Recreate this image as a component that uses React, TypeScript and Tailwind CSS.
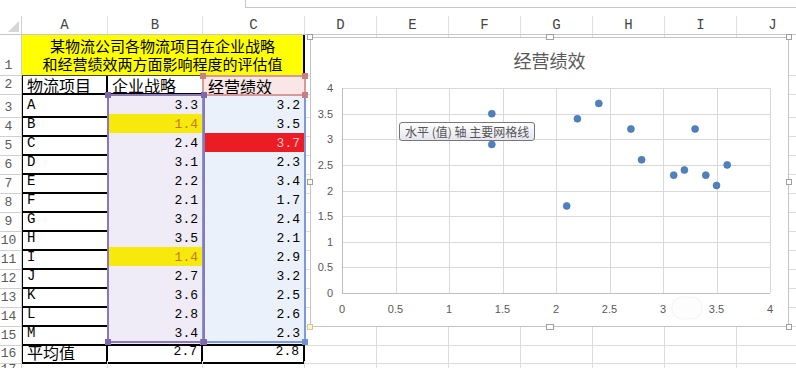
import React from 'react'

const GRID = 'grid grid-cols-[22px_86px_95px_102px_repeat(7,72px)]'
const COLS = ['A', 'B', 'C', 'D', 'E', 'F', 'G', 'H', 'I', 'J']

const DATA: [string, number, number][] = [
    ['A', 3.3, 3.2],
    ['B', 1.4, 3.5],
    ['C', 2.4, 3.7],
    ['D', 3.1, 2.3],
    ['E', 2.2, 3.4],
    ['F', 2.1, 1.7],
    ['G', 3.2, 2.4],
    ['H', 3.5, 2.1],
    ['I', 1.4, 2.9],
    ['J', 2.7, 3.2],
    ['K', 3.6, 2.5],
    ['L', 2.8, 2.6],
    ['M', 3.4, 2.3],
]

function RowNum({ n }: { n: number }) {
    return (
        <div className="flex items-end justify-center pr-1 pb-[1px] border-r border-b border-[#d0d0d0] text-[13px] leading-[17px] text-[#5a5a5a]">
            {n}
        </div>
    )
}

function Blanks({ n = 7 }: { n?: number }) {
    return (
        <>
            {Array.from({ length: n }).map((_, i) => (
                <div key={i} className="border-r border-b border-[#dcdcdc]" />
            ))}
        </>
    )
}

function Handle({ className }: { className: string }) {
    return <span className={`absolute w-[6px] h-[6px] ${className}`} />
}

// plot scale (svg coords)
const sx = (v: number) => 31 + v * 107
const sy = (v: number) => 209 - v * 51.25
const TICKS = [0, 0.5, 1, 1.5, 2, 2.5, 3, 3.5, 4]

function Chart() {
    return (
        <div className="absolute left-[310px] top-[37px] w-[479px] h-[290px] border border-[#c4c4c4] bg-white">
            <div className="h-[45px] flex items-center justify-center text-[18px] text-[#595959] font-['Noto_Sans_CJK_SC',sans-serif]">
                经营绩效
            </div>
            <svg width="477" height="243" className="block overflow-visible" shapeRendering="crispEdges">
                <g transform="translate(0,1)">
                    {TICKS.map((t) => (
                        <line key={'h' + t} x1={sx(0)} x2={sx(4)} y1={Math.round(sy(t)) + 0.5} y2={Math.round(sy(t)) + 0.5} stroke={t === 0 ? '#bfbfbf' : '#d9d9d9'} />
                    ))}
                    {TICKS.map((t) => (
                        <line key={'v' + t} y1={sy(4)} y2={sy(0)} x1={Math.round(sx(t)) + 0.5} x2={Math.round(sx(t)) + 0.5} stroke={t === 0 ? '#bfbfbf' : '#d9d9d9'} />
                    ))}
                    <g fontFamily="Liberation Sans, sans-serif" fontSize="11" fill="#595959" shapeRendering="auto">
                        {TICKS.map((t) => (
                            <text key={'yl' + t} x={22} y={sy(t) + 4} textAnchor="end">
                                {t}
                            </text>
                        ))}
                        {TICKS.map((t) => (
                            <text key={'xl' + t} x={sx(t)} y={229} textAnchor="middle">
                                {t}
                            </text>
                        ))}
                    </g>
                    <rect x={361} y={213} width={30} height={22} rx={10} fill="#fdfdfd" stroke="#f3f3f3" shapeRendering="auto" />
                    <g shapeRendering="auto">
                        {DATA.map(([k, x, y]) => (
                            <circle key={k} cx={sx(x)} cy={sy(y)} r={3.5} fill="#4f81bd" stroke="#4170aa" strokeWidth={0.6} />
                        ))}
                    </g>
                </g>
            </svg>

            {/* tooltip */}
            <div className="absolute left-[88px] top-[84px] h-[19px] px-[5px] flex items-center rounded-[3px] border border-[#777] bg-gradient-to-b from-white to-[#e4e5ee] text-[12px] text-[#555] font-['Noto_Sans_CJK_SC',sans-serif] whitespace-nowrap">
                水平 (值) 轴 主要网格线
            </div>

            {/* selection handles */}
            <Handle className="-left-[4px] -top-[4px] border border-[#a0a0a0] bg-white" />
            <Handle className="left-[235px] -top-[4px] w-[8px] border border-[#a0a0a0] bg-white" />
            <Handle className="-right-[4px] -top-[4px] border border-[#a0a0a0] bg-white" />
            <Handle className="-left-[4px] top-[141px] border border-[#a0a0a0] bg-[#fffbe8]" />
            <Handle className="-right-[4px] top-[141px] border border-[#a0a0a0] bg-white" />
            <Handle className="-left-[4px] -bottom-[4px] border border-[#d8c890] bg-[#fff6d0]" />
            <Handle className="left-[235px] -bottom-[4px] w-[8px] border border-[#a0a0a0] bg-white" />
            <Handle className="-right-[4px] -bottom-[4px] border border-[#a0a0a0] bg-white" />
        </div>
    )
}

export default function App() {
    return (
        <div className="relative w-[796px] h-[368px] overflow-hidden bg-white text-black font-['Liberation_Mono','Noto_Sans_CJK_SC',monospace]">
            {/* formula bar edge */}
            <div className="flex h-[16px]">
                <div className="w-[245px]" />
                <div className="flex-1 h-[8px] border-l border-b border-[#c6c6c6]" />
            </div>

            {/* column headers */}
            <div className={`${GRID} h-[19px] border-b border-[#c8c8c8]`}>
                <div className="border-r border-[#d0d0d0]">
                    <svg width="21" height="18">
                        <polygon points="19,5 19,16 8,16" fill="#d6d6d6" />
                    </svg>
                </div>
                {COLS.map((c) => (
                    <div key={c} className="flex items-end justify-center pb-[1px] border-r border-[#e0e0e0] text-[14px] leading-[16px] text-[#444]">
                        {c}
                    </div>
                ))}
            </div>

            {/* row 1 */}
            <div className={`${GRID} h-[41px]`}>
                <RowNum n={1} />
                <div className="col-span-3 flex flex-col items-center justify-center bg-[#ffff00] border-r-2 border-r-black border-b border-b-[#444] text-[15px] leading-[18px] font-['Noto_Sans_CJK_SC',sans-serif]">
                    <div>某物流公司各物流项目在企业战略</div>
                    <div>和经营绩效两方面影响程度的评估值</div>
                </div>
                <Blanks />
            </div>

            {/* row 2 */}
            <div className={`${GRID} h-[19px]`}>
                <RowNum n={2} />
                <div className="flex items-center pl-1 border-l border-l-black border-r-2 border-r-black border-b-2 border-b-black text-[16px] leading-none font-['Noto_Sans_CJK_SC',sans-serif]">
                    物流项目
                </div>
                <div className="flex items-center pl-1 border-b-2 border-b-black text-[16px] leading-none font-['Noto_Sans_CJK_SC',sans-serif]">
                    企业战略
                </div>
                <div className="flex items-center pl-[5px] bg-[#f9e6e6] text-[16px] leading-none font-['Noto_Sans_CJK_SC',sans-serif]">
                    经营绩效
                </div>
                <Blanks />
            </div>

            {/* data rows */}
            {DATA.map(([k, b, c], i) => {
                const bHot = b === 1.4
                const cHot = c === 3.7
                return (
                    <div key={k} className={`${GRID} h-[19px]`}>
                        <RowNum n={i + 3} />
                        <div className="flex items-center pl-1 border-l border-l-black border-b-2 border-b-black text-[14px]">{k}</div>
                        <div className={`flex items-center justify-end pr-[5px] border-b-2 border-b-black text-[13px] ${bHot ? 'bg-[#f7e90c] text-[#c57a22]' : 'bg-[#f0ecf7]'}`}>
                            {b.toFixed(1)}
                        </div>
                        <div className={`flex items-center justify-end pr-[5px] border-b-2 border-b-black text-[13px] ${cHot ? 'bg-[#ec1c24] text-[#f8c4c4]' : 'bg-[#ebf1fa]'}`}>
                            {c.toFixed(1)}
                        </div>
                        <Blanks />
                    </div>
                )
            })}

            {/* row 16: averages */}
            <div className={`${GRID} h-[19px]`}>
                <RowNum n={16} />
                <div className="flex items-center pl-1 border-l border-l-black border-r-2 border-r-black border-b-2 border-b-black text-[16px] leading-none font-['Noto_Sans_CJK_SC',sans-serif]">
                    平均值
                </div>
                <div className="flex items-center justify-end pr-[4px] border-r-2 border-r-black border-b-2 border-b-black text-[13px]">2.7</div>
                <div className="flex items-center justify-end pr-[4px] border-r-2 border-r-black border-b-2 border-b-black text-[13px]">2.8</div>
                <Blanks />
            </div>

            {/* row 17 */}
            <div className={`${GRID} h-[19px]`}>
                <RowNum n={17} />
                <Blanks n={10} />
            </div>

            {/* formula reference ranges */}
            <div className="absolute left-[202px] top-[94px] w-[104px] h-[249px] border-2 border-[#7b9ad6]">
                <Handle className="-right-[4px] -top-[4px] bg-[#6f8fcf]" />
                <Handle className="-right-[4px] -bottom-[4px] bg-[#6f8fcf]" />
                <Handle className="-left-[4px] -bottom-[4px] bg-[#6f8fcf]" />
            </div>
            <div className="absolute left-[202px] top-[75px] w-[104px] h-[21px] border-2 border-[#d69a9a]">
                <Handle className="-left-[4px] -top-[4px] bg-[#c97f7f]" />
                <Handle className="-right-[4px] -top-[4px] bg-[#c97f7f]" />
                <Handle className="-right-[4px] -bottom-[4px] bg-[#c97f7f]" />
            </div>
            <div className="absolute left-[107px] top-[94px] w-[98px] h-[249px] border-2 border-[#8d78b6]">
                <Handle className="-left-[4px] -top-[4px] bg-[#8168ac]" />
                <Handle className="-right-[4px] -top-[4px] bg-[#8168ac]" />
                <Handle className="-left-[4px] -bottom-[4px] bg-[#8168ac]" />
                <Handle className="-right-[4px] -bottom-[4px] bg-[#8168ac]" />
            </div>

            <Chart />
        </div>
    )
}
